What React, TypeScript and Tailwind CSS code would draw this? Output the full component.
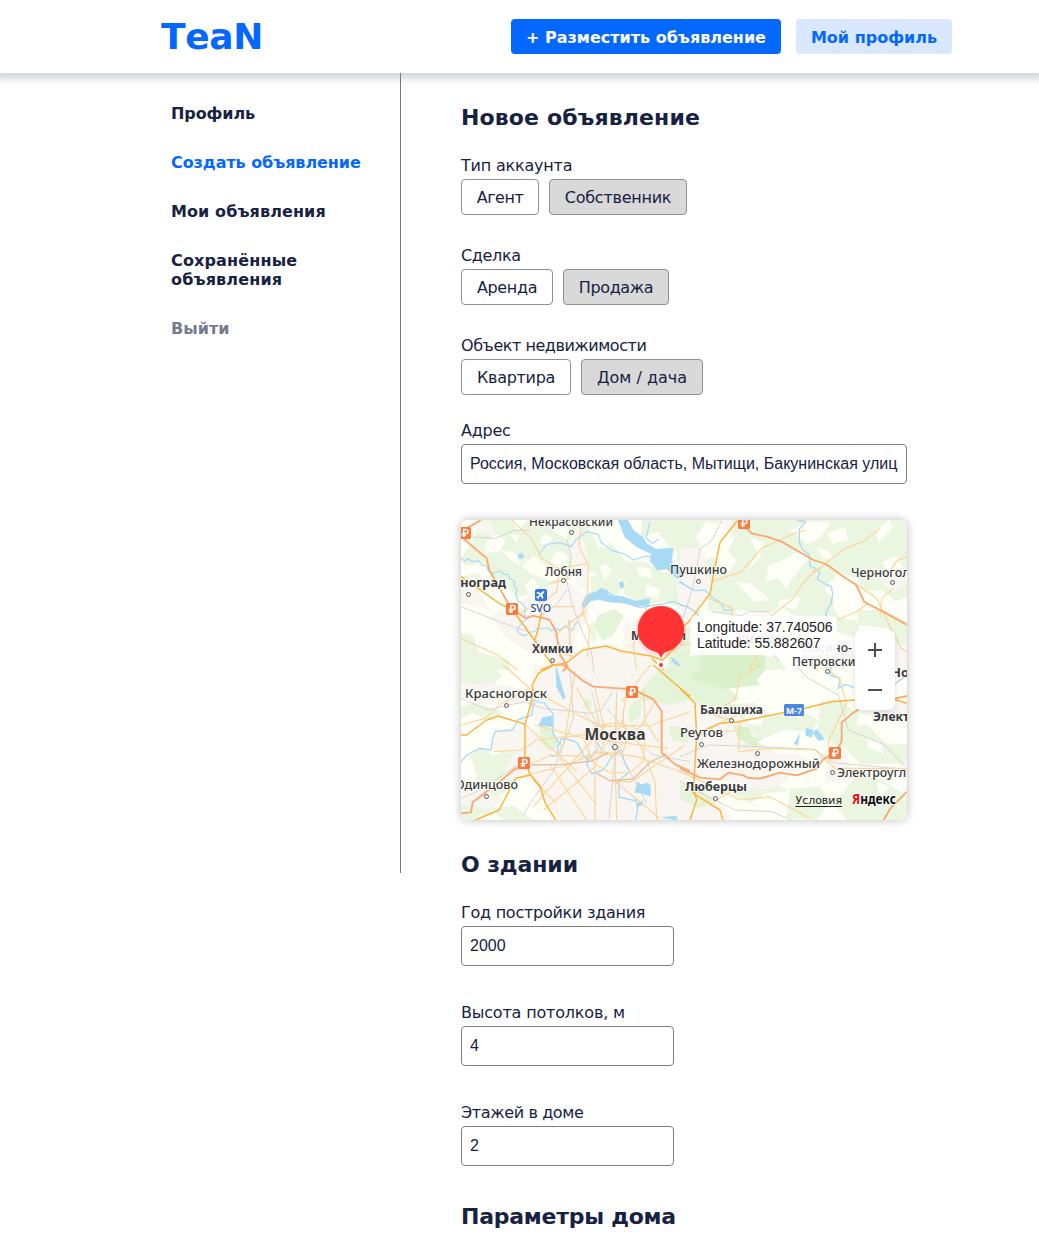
import type { ReactNode } from "react";

function NavItem({ children, className = "text-[#172242]" }: { children: ReactNode; className?: string }) {
  return (
    <a href="#" className={`block text-base font-bold leading-[19px] ${className}`}>
      {children}
    </a>
  );
}

function Heading({ children, className = "" }: { children: ReactNode; className?: string }) {
  return <h2 className={`text-[22px] font-bold leading-[27px] ${className}`}>{children}</h2>;
}

function Choice({ children, active = false, className }: { children: ReactNode; active?: boolean; className: string }) {
  return (
    <button
      className={`flex h-9 items-center justify-center whitespace-nowrap rounded border border-[#8f9090] pt-px text-base leading-[19px] ${active ? "bg-[#d9d9d9]" : "bg-white"} ${className}`}
    >
      {children}
    </button>
  );
}

function Label({ children, className = "" }: { children: ReactNode; className?: string }) {
  return <div className={`mb-1 whitespace-nowrap text-base leading-[19px] ${className}`}>{children}</div>;
}

function Field({ label, value, labelClass, boxClass }: { label: string; value: string; labelClass: string; boxClass: string }) {
  return (
    <div>
      <Label className={labelClass}>{label}</Label>
      <input
        readOnly
        value={value}
        className={`block h-10 rounded border border-[#808080] bg-white px-2 font-['Liberation_Sans',sans-serif] text-base text-[#172242] outline-none ${boxClass}`}
      />
    </div>
  );
}

type Place = { t: string; x: number; y: number; w: number; s: number; b?: boolean; d?: [number, number] };

const places: Place[] = [
  { t: "Некрасовский", x: 68, y: 6, w: 84, s: 12, d: [110.5, 12.5] },
  { t: "Лобня", x: 84, y: 56, w: 37, s: 12, d: [102.5, 60.5] },
  { t: "Пушкино", x: 209, y: 54, w: 57, s: 12.5, d: [237.5, 61.5] },
  { t: "Черноголовка", x: 390, y: 57, w: 87, s: 12, d: [431.5, 62.5] },
  { t: "Зеленоград", x: -31, y: 67, w: 76, s: 12, b: true, d: [7.5, 74.5] },
  { t: "Химки", x: 71, y: 133, w: 41, s: 12.5, b: true, d: [91.5, 140.5] },
  { t: "Мытищи", x: 170, y: 120, w: 55, s: 12.5, b: true },
  { t: "Щёлково", x: 277, y: 123, w: 50, s: 12, b: true },
  { t: "Лосино-", x: 342, y: 132, w: 49, s: 12 },
  { t: "Петровский", x: 331, y: 146, w: 71, s: 12, d: [366.5, 151.5] },
  { t: "Ногинск", x: 430, y: 157, w: 56, s: 12, b: true },
  { t: "Электросталь", x: 412, y: 201, w: 86, s: 12, b: true },
  { t: "Красногорск", x: 4, y: 178, w: 82, s: 12.5, d: [45.5, 185.5] },
  { t: "Балашиха", x: 239, y: 194, w: 63, s: 12.5, b: true, d: [270.5, 200.5] },
  { t: "Москва", x: 123.5, y: 220, w: 61, s: 16.5, b: true },
  { t: "Реутов", x: 219, y: 217, w: 43, s: 12.5, d: [240.5, 224.5] },
  { t: "Железнодорожный", x: 236, y: 248, w: 123, s: 12.5, d: [296.5, 233.5] },
  { t: "Электроугли", x: 376, y: 257, w: 77, s: 12, d: [371.5, 252.5] },
  { t: "Одинцово", x: -6, y: 269, w: 63, s: 12.5, d: [25.5, 276.5] },
  { t: "Люберцы", x: 224, y: 271, w: 62, s: 12.5, b: true, d: [254.5, 278.5] },
];

const tolls: [number, number][] = [[4, 13], [51, 89], [283, 3], [171, 172], [63, 243], [374, 233]];

/* Each terrain sheet is drawn at three times the map's scale. */
const NW = "translate(-11 -10) scale(.33333)";
const NE = "translate(219 -10) scale(.33333)";
const SW = "translate(-11 145) scale(.33333)";
const SE = "translate(219 145) scale(.33333)";

function Terrain() {
  return (
    <g>
      <rect width="446" height="300" fill="#fefff6" />
      <g fill="#eaf6e0">
        <g transform={NW}>
          <path d="M95 30h90l30 45 35-10 25 40-45 25-10 42 35 28-30 25 12 30-38 5-35-40-15 20-30-32 5-30-32-18-45 8-15-20 35-55zM235 28l55 2 20 35 40 22 5-57h50l25 50 60 25 40 52 50-4 60 32-25 35-55 12-35-15-60-30-25 5-45-12-18 22-35-55-50 22-40-30-32 22-40-10 22-48-30-10zM33 200l55-10 20 38-30 35-45-7zM135 180l45 5 30 20-4 40-38-18zM575 30h145v112l-55-22-40-55-50 20zM250 190l50 25 25-10 8 48-20 20-38-25-22-40zM540 185l30 18 100-20 50 80v45l-80-35-70 15-50-40zM420 200l60-18 35 40-10 35-80-5zM445 315l48-18 28 22-32 55-30 18-28-42zM415 350l15-15 10 55-15 5zM33 370l35 5 20 52 90 25v28H33zM265 330l25-8 2 50-28 15zM670 410l50-5v75h-65z" />
        </g>
        <g transform={NE}>
          <path d="M0 30h681v230l-35 15-40-35-55 5-18-40-60-20-20 45 10 55-28 38-55-25-38 18-40-28-35 25-70-25-40 25-75-12 10-85-62 2-40-70z" />
          <path d="M345 270l95-5 40 60 62 10-15 45-60-15-45 12-75-18zM530 300l80 0 71 35v80l-45-8-12-52-90-10zM135 270l60-22 50 35-15 25-60-10zM30 440l50-30 55 30 50 10 30 30H30zM230 440l60 0 30 40h-80z" />
        </g>
        <g transform={SW}>
          <path d="M33 0l80 0 45 30-35 35-90-10zM33 125l40-12 50 15 38 15-35 22-60-20-33 15zM60 270l38-25 30 28 60-25 20 22-15 42 20 32-60 45-35 65-50-10-12-70 25-40zM33 420l38-40 30 25-20 60H33zM270 180l40 12 15 50-25 20-30-28zM550 110l25-8-4 52-30 20-8-32zM410 100l22 5-6 35-24-10zM655 185l60 0v50l-48-10zM650 360l70 10v50l-55-28zM120 430l70-8 60 43h-90z" />
        </g>
        <g transform={SE}>
          <path d="M0 95l70-5 70 28 85-5 50 40 90-15 50 28-30 50 30 40-80 20-70-5-95 30-120-20-50-30zM180 180l70 0 50 30-40 40-75-15zM420 110l60-10 55 52-12 100-60-10-50-40zM500 190l60-12 60 60 61 0v58l-140 0-40-40zM190 340l75 2 60 35-65 8-50 30-50-25zM330 370l90-5 30 45-40 55-90-5zM530 330l80 15 71 50v70H500l-38-50zM0 370l50 0 60 50-60 15-50-30zM90 310l85-30 20 30-60 15z" />
        </g>
      </g>
      <g fill="#f9f6f1">
        <g transform={NW}>
          <path d="M280 235l65-28 60 50 15 65-38 45-22 60-65 8-42-70-42-30 5-65zM120 320l60-35 60 60 50 65-30 30-90-55zM390 50l22 80 0 110-28-10-32-130zM33 215l55 25 30 60-85-20zM400 420l75-20 130 35 75 45H270l45-48zM520 350l70-45 55 100-40 55-78-15zM60 30l65 8 10 42-45-12zM670 170l50 20v110l-30-5z" />
        </g>
        <g transform={NE}>
          <path d="M0 120l60-10 20 50 12 80-30 42 0 85-62 10zM115 30l38 0 2 50-42 15zM180 320l80-15 38 25-10 50 18 45-80-5-50-50zM590 190l91 0v30l-40 25-32-20zM370 395l140-5 15 60-60 30-110-10zM560 420l121-20v80H580z" />
        </g>
        <g transform={SW}>
          <path d="M250 0h370l30 50 75 30 45 62-20 40-48 5-35 50 120 40-10 125-62 15-20 48H325l-80-120-90-5 35-70 18-60 60-30-35-45zM33 60l80-5 130 20-18 45-70-5-58 8-62-28zM130 190l95 0 0 50-50 25-48-15zM33 360l60 5 65 40-50 30-70-20z" />
        </g>
        <g transform={SE}>
          <path d="M-20 120l100 0 95 30 55 60-55 40 105 12 50 80-60 32-100-8-55-30-35 30 55 60 20 39H-60l20-100zM440 255l60 0 15 90-80 10zM590 120l91-10v40l-60 15zM200 250l205 2 35 30-95 38-145-8z" />
        </g>
      </g>
      <g fill="#e4f4d8">
        <g transform={NW}><path d="M653 438l67-22v64h-60zM690 360l30-8v60l-28 5zM445 315l48-18 28 22-32 55-30 18-28-42z" /></g>
        <g transform={SW}><path d="M630 10l90-15v110l-65 15-100-20zM550 110l25-8-4 52-30 20-8-32zM270 180l40 12 15 50-25 20-30-28zM655 185l60 0v50l-48-10zM405 100l22 5-6 35-24-10z" /></g>
        <g transform={SE}><path d="M0-20l130-20 110 25-60 35-45 40 45 40-55 28-95-20-25-20zM0 360l50 5 60 50-60 15-50-30z" /></g>
      </g>
      <g fill="#dbf1cc">
        <path transform={NE} d="M60 430l90 5 30-35 75 5 0 75-25 30 10 15-115 12-95-32 30-35z" />
        <path transform={SE} d="M160 180l50 8 8 30 50 5-45 22-50-25z" />
      </g>
      <g fill="#fefff6">
        <g transform={NW}>
          <path d="M110 90l35-18 22 22-18 30-48 8zM155 120l40 8 18 40-34-20zM280 70l28 14-15 25-24-10zM318 120l38 18-12 28-42-10zM430 75l32 8 20 32-38-5zM490 62l22 20-8 22-28-15zM448 170l18-10 20 20-22 30zM560 170l40 5 8 30-40-8zM640 92l18 25-12 22zM590 225l42 12-8 28-38-12zM180 72l28 5-8 22zM60 200l20 8-12 35-18-20z" />
        </g>
        <g transform={NE}>
          <path d="M48 80l30-45 48 5 38 45-22 38 28 28-28 42-42-55-22 12zM210 80l40 15-10 48-38 40 30-55zM330 60l52-25 70 0-28 45-42 22zM440 70l55-18 8 38-45 12zM265 165l52-18 48-30 20 30-38 45-28 42-25-30-36 10zM410 115l30 4 25 30-35-5zM455 210l55 40 40-12-5 35-72 2-38-32zM590 60l38-30 12 22-45 48zM608 155l40-18 20 35-45 35zM170 215l42 5 60 50-50 6zM300 270l60-8-12 38-55-15z" />
        </g>
        <g transform={SE}>
          <path d="M230 230l80-35 80 5 45 55-22 38-70-30-45 5zM195 150l60-10-12 42-40-5zM330 130l50-5-20 38zM560 220l40 10 15 38-50-20zM590 350l40 15-30 30zM380 390l30 5-20 30z" />
        </g>
      </g>
      <g fill="none" stroke="#a9daf5" strokeWidth="4" strokeLinejoin="round">
        <g transform={NW}>
          <path d="M33 147l12 5 8-6 14 9 18-3 12 14 12 2 8 17 14 4 20-6 10 10 14 0 4 12 16 10-4 12 10 10-4 16 6 20 14 8 10 14-4 14 4 20-12 10-14 22 12 12 14 4 12-10 14-2 12-12 16 4 12-4 12 10 14-8 10 6 16-14 10 8 12 6 10-22 10-4M265 135l25-32 40-5 35 12 12-20 33-25 35 8 8 24 35 25 35 10 28 18 38-12 42 5 38 14M600 35l-12 50 20 15 18-12M465 240l50 35 55 18 60-10 40-8 50 20M685 215l35 18" strokeWidth="3.5" />
          <path d="M505 30h28l18 32 28 20 10 18 30 18 50-3-5 48 28 18 10 15-20 10-32-30-28 4-22-28 5-20-45-22-35-28zM400 275l10-22 30-8 12-10 18 5 5 15 45 5 38 14 42-8-3 20-42 2-25-8-50-4-35-8-25 5-15 20-10-4zM205 134l12-5 4 14-14 2zM508 218l10-4 6 16-12 6zM664 442l16 12 10 12-8 2-14-15z" fill="#a9daf5" strokeWidth="2" />
        </g>
        <g transform={NE}>
          <path d="M350 30l28 5-20 22 0 38 8 22 22 18 2 32 15 8 15 12-8 20 30 18 12 4 4 24-5 28-15 25 0 35 15 25M0 212l15 14 30 16 30-2 20 20 30 22 10 20 25-4M0 285l20 4 30 18 8 22" />
        </g>
        <g transform={SW}>
          <path d="M280 110l30 38-2 55 18 30-5 38-15 3-6-8M33 290l18-20 37-20 35 5 5-35 8-20 52-5 15-30 42-15 8-45 25 10M330 240l2-18 20 0 28 10 25 45 10 10 20-28 10-5M415 265l-5 32 15 30 35-12 32-48 22-12 10 38 15 28-32 25 0 50 52 12M555 395l8 35-5 35M440 230l15 25" />
          <path d="M555 382l8-32 10 10 20-6 8 8 0 30-30-8zM278 158l28-5 2 32-42-4zM318 5l2 60 20 38 6-4-10-32-8-30zM562 415l16-7 0 10-15 8zM638 458l42-5v12z" fill="#a9daf5" strokeWidth="2" />
        </g>
        <g transform={SE}>
          <path d="M455 0l-5 30 30 10-5 30 22-12 25 10M640 60l35-25" />
          <path d="M378 190l22 5-5 22-18-5zM398 205l12-14 24 32-18 4zM342 235l18-28-8 35z" fill="#a9daf5" strokeWidth="1" />
        </g>
      </g>
      <g fill="none" stroke="#cfcecc" strokeWidth="2.5">
        <path transform={NW} d="M33 78l100 8 60-25h45M352 90l12 55-15 65 18 75 22 60 35 80 8 65M33 290l115 45 85 30 42 40M350 240l-30 45-45 30M355 330l5 85M640 300l-50 90" />
        <path transform={NE} d="M125 32l-30 60-35 25-20 110-30 95M95 305l90 12 20-12 60 0M250 400l50 55" />
        <path transform={SW} d="M33 100l80 35 110-25 55 20 145 15 30-10 35-55M33 400l60-25 130-90M360 10l10 150-60 160-60 80-30 50M425 80l25 100 50 95M470 130l80 90 60 50 110 20M400 140l50 60 50 45 90 170M500 80l-5 190-18 190" />
        <path transform={SE} d="M0 275l85-35 155 5 165 8 55 40 220 20M350 5l35 35 90 50 30 105 110 45 60 65M0 350l65 35 100 50 110 5 60 25" />
      </g>
      <g fill="none" stroke="#fcd59b" strokeWidth="3.5" strokeLinejoin="round">
        <path transform={NW} d="M185 30l60 55 30 60 50 30 90-15M392 50l-5 60 28 55-2 90-15 50 20 55-5 80M33 385l110 50 60 45M330 175l-10 70-45 35M210 310l60-35 40 15 65 0M310 380l100-80M550 405l10 75M355 340l50-30M300 220l60-15M375 440l-60-15M590 290l-40 115M360 330v110" />
        <path transform={NE} d="M95 215l90-30 60-70 100-45 35-10M270 320l65-50 30-45 40-45M400 190l95-75 55-20 50-40M525 220l65 45 38 80 35 70 18 10M681 140l-30 12-30 45M640 235l-35 30-5 55M470 330l60-25 35-25M85 265l70 28v55M0 405l120-15M210 480l25-50 70-75" />
        <path transform={SW} d="M160 0l85 75 130 70 80 40 150-5 115-40M240 70l-85 45-50 45-72 20M225 178l55 50 100 90M255 180l150 40 250 30M185 320l120-50 130 5M130 260l85-5 45-30 170-20M230 330l120-30 100-40 110 15 160 55M435 70l25 110 0 75-25 40 0 170M470 180l-70 75-150 170M500 110l-5 160 5 195M520 130v50l50 60 45 110 5 115M530 75l-15 105-50 60M615 110l-40 70-80 80M380 70l65 110M405 230l30-45 60-12 55 12 35 35-5 70-40 32-60 2-50-30zM435 230l30-25 45-5 20 25-10 35-40 12-35-10zM375 20l-30 200-20 50M280 435l110-90 45-40M300 300l110 165M330 280l110 140M250 345l70 70M490 345l140 115M580 70l5 100 40 60M600 0l-45 60-40 50M485 350l60 0 160-110" />
        <path transform={SE} d="M245 0l-65 35-15 70-65 35M85 145l95 30-5 80M430 0l50 45 20 70-55 115 5 60M0 190l60 20 120-15M175 260l90-10 140 5 60 55 220 0M0 320l100 45 80 40 90-10 120 65M100 410l70-40M60 205l120-60M400 0l15 20" />
      </g>
      <path transform={SW} d="M245 300l100-2 80-10 50-25M440 325l40 22 70-5 50-50 50-25" fill="none" stroke="#e0bfa4" strokeWidth="4" />
      <g fill="none" stroke="#fbb53f" strokeWidth="4.5" strokeLinejoin="round">
        <path transform={NW} d="M33 200l115 80 40 20 65 90 55 75 40-5 50-40 70-12 45 15 90 15 35 12 35-35 25-40M310 465l-38 15M275 305l-10 50-12 40M605 445l35 35" />
        <path transform={NE} d="M172 32l-52 65-20 100-10 55-20 25-45 60-25 20" />
        <path transform={SW} d="M350 0h-40l-45 25-18 35 3 30-25 88-80-25-35 12-60 45H33M225 178v110l15 40 30 35 15 50 32 52M270 365l-28-35-45 10-50 95-70 30M610 0l110 95" />
        <path transform={SE} d="M0 70l45 45 5 100-5 80-5 90 80 50 10 35M75 195l45-20 55-5 200-40 80-20 70-5 95-8 60 18M30 465l20-60-10-40" />
      </g>
      <g fill="none" stroke="#fba870" strokeWidth="5.5" strokeLinejoin="round">
        <path transform={NW} d="M45 90l-12-25 60-35M45 90l65 55 8 35 65 115 45 30 20-8 50 12 20 35 12 70 23 35-15 15" />
        <path transform={NE} d="M190 45l25 25 45 10 45 15 95 55 38 12 55 40 35 22 25 52 55 28 72 40" />
        <path transform={SW} d="M340 0l60 48 30 17 120 8 60 30 25 35v125l40 35 45 20M33 445l30-3 5-30 85-65 40-35 32-12" />
        <path transform={SE} d="M0 310l60 28 60 5 25-20 45 8 15 8 35 2 60-18 50 8 60-20 20-28 40-25 15-30 0-55 35-30 40-25 121-25M681 380l-50 50-20 35" />
      </g>
    </g>
  );
}

function TownMap() {
  return (
    <svg viewBox="0 0 446 300" className="block h-[300px] w-[446px] rounded-md" fontFamily="'Noto Sans', sans-serif">
      <Terrain />
      {places.map((p) => (
        <g key={p.t}>
          <text
            x={p.x}
            y={p.y}
            fontSize={p.s}
            fontWeight={p.b ? 700 : 500}
            textLength={p.w}
            lengthAdjust="spacingAndGlyphs"
            fill="#3a3b40"
            stroke="#fffffb"
            strokeWidth="2"
            strokeOpacity=".8"
            paintOrder="stroke"
          >
            {p.t}
          </text>
          {p.d && <circle cx={p.d[0]} cy={p.d[1]} r="2" fill="#fff" stroke="#55565a" />}
        </g>
      ))}
      <circle cx="154" cy="227" r="2.5" fill="#fff" stroke="#55565a" />

      {tolls.map(([x, y]) => (
        <g key={`${x}-${y}`} transform={`translate(${x} ${y})`}>
          <rect x="-6" y="-6" width="12" height="12" rx="1.5" fill="#fc7a3c" />
          <path d="M-1.3 4V-3.5H1a2 2 0 0 1 0 4H-3.2M-3.2 2.4H1" fill="none" stroke="#fff" strokeWidth="1.5" />
        </g>
      ))}

      <rect x="74" y="69" width="12" height="12" rx="2" fill="#3177e8" />
      <path
        d="M83.2 71.2c-.6-.4-1.400 0-2 .7l-1 1-4-.8-.9.8 3.200 1.900-1.500 1.700-1.600-.1-.6.6 1.700.9.9 1.700.6-.6-.1-1.600 1.700-1.500 1.900 3.200.8-.9-.8-4 1-1c.7-.6 1.100-1.400.7-2z"
        fill="#fff"
      />
      <text x="69.500" y="92" fontSize="10.500" textLength="20.500" lengthAdjust="spacingAndGlyphs" fill="#20469d" stroke="#fff" strokeWidth="2" paintOrder="stroke" fontWeight="500">SVO</text>
      <rect x="323" y="184" width="20" height="12" rx="1.500" fill="#4c86e5" />
      <text x="325" y="193.500" fontSize="9" fontWeight="700" textLength="16" lengthAdjust="spacingAndGlyphs" fill="#fff">М-7</text>

      <circle cx="200" cy="111" r="25.500" fill="#ff3333" opacity=".1" />
      <path d="M200 86a23.300 23.300 0 0 1 23.300 23.300c0 11.500-8 20.500-18.300 22.700-2.500.6-3.300 2.500-5 6-1.700-3.500-2.500-5.400-5-6-10.300-2.200-18.300-11.200-18.300-22.700A23.300 23.300 0 0 1 200 86z" fill="#ff3333" />
      <circle cx="200" cy="145" r="4" fill="#fff" />
      <circle cx="200" cy="145" r="2" fill="#ff3333" />

      <rect x="230" y="96" width="146" height="39" rx="4" fill="#fff" opacity=".9" />
      <g fontFamily="'Liberation Sans', sans-serif" fontSize="14" fill="#222">
        <text x="236" y="112" textLength="135.500">Longitude: 37.740506</text>
        <text x="236" y="128" textLength="123.500">Latitude: 55.882607</text>
      </g>

      <g className="drop-shadow-md">
        <rect x="394" y="110" width="40" height="80" rx="6" fill="#fff" />
      </g>
      <path d="M407 130h14M414 123v14M407 170h14" stroke="#4d4d4d" strokeWidth="2" />

      <text x="334.500" y="284" fontSize="11" fontFamily="'DejaVu Sans', sans-serif" textLength="46.500" lengthAdjust="spacingAndGlyphs" fill="#222">Условия</text>
      <path d="M334.500 286.500h46.500" stroke="#222" />
      <text x="391" y="284" fontSize="13.500" fontWeight="700" textLength="44" lengthAdjust="spacingAndGlyphs" stroke="#fff" strokeWidth="2" paintOrder="stroke">
        <tspan fill="#ff0000">Я</tspan><tspan fill="#111">ндекс</tspan>
      </text>
    </svg>
  );
}

export default function App() {
  return (
    <div className="h-[1248px] overflow-hidden bg-white font-['DejaVu_Sans',sans-serif] text-[#172242]">
      <header className="flex h-[73px] items-center justify-between bg-white pl-[161px] pr-[87px] shadow-[0_2px_7px_4px_rgba(7,37,51,0.18)]">
        <a href="#" className="tracking-[-0.3px] text-4xl font-bold text-[#0468ff] [font-kerning:none]">TeaN</a>
        <div className="flex gap-[15px] text-base font-bold leading-[19px]">
          <button className="h-[35px] w-[270px] rounded bg-[#0468ff] pt-0.5 text-white">+ Разместить объявление</button>
          <button className="h-[35px] w-[156px] rounded bg-[#d9e7ff] pt-0.5 text-[#0468ff]">Мой профиль</button>
        </div>
      </header>

      <div className="flex">
        <aside className="ml-[161px] flex h-[800px] w-60 flex-col gap-[30px] border-r border-[#7a7a7a] py-[31px] pl-2.5">
          <NavItem className="tracking-[-0.1px] text-[#172242]">Профиль</NavItem>
          <NavItem className="tracking-[-0.07px] text-[#0468ff]">Создать объявление</NavItem>
          <NavItem className="tracking-[0.1px] text-[#172242]">Мои объявления</NavItem>
          <NavItem className="w-40 tracking-[0.15px] text-[#172242]">Сохранённые объявления</NavItem>
          <NavItem className="text-[#747b8e]">Выйти</NavItem>
        </aside>

        <main className="ml-[60px] w-[446px] pt-[31px]">
          <Heading className="tracking-[0.14px]">Новое объявление</Heading>

          <section className="mt-[25px]">
            <Label className="tracking-[-0.2px]">Тип аккаунта</Label>
            <div className="flex gap-2.5">
              <Choice className="w-[78px] tracking-[-0.5px]">Агент</Choice>
              <Choice active className="w-[138px] tracking-[-0.25px]">Собственник</Choice>
            </div>
          </section>

          <section className="mt-[31px]">
            <Label className="tracking-[-0.35px]">Сделка</Label>
            <div className="flex gap-2.5">
              <Choice className="w-[92px] tracking-[-0.35px]">Аренда</Choice>
              <Choice active className="w-[106px] tracking-[-0.4px]">Продажа</Choice>
            </div>
          </section>

          <section className="mt-[31px]">
            <Label className="tracking-[-0.46px]">Объект недвижимости</Label>
            <div className="flex gap-2.5">
              <Choice className="w-[110px] tracking-[-0.3px]">Квартира</Choice>
              <Choice active className="w-[122px]">Дом / дача</Choice>
            </div>
          </section>

          <div className="mt-[26px]">
            <Field label="Адрес" value="Россия, Московская область, Мытищи, Бакунинская улица" labelClass="tracking-[-0.25px]" boxClass="w-[446px]" />
          </div>

          <div className="mt-9 rounded-md shadow-[0_0_10px_rgba(0,0,0,0.27)]">
            <TownMap />
          </div>

          <Heading className="mt-[31px] tracking-[-0.1px]">О здании</Heading>
          <div className="mt-[25px] flex flex-col gap-[37px]">
            <Field label="Год постройки здания" value="2000" labelClass="tracking-[-0.26px]" boxClass="w-[213px]" />
            <Field label="Высота потолков, м" value="4" labelClass="tracking-[-0.18px]" boxClass="w-[213px]" />
            <Field label="Этажей в доме" value="2" labelClass="tracking-[-0.38px]" boxClass="w-[213px]" />
          </div>

          <Heading className="mt-[37px] tracking-[-0.26px]">Параметры дома</Heading>
        </main>
      </div>
    </div>
  );
}
